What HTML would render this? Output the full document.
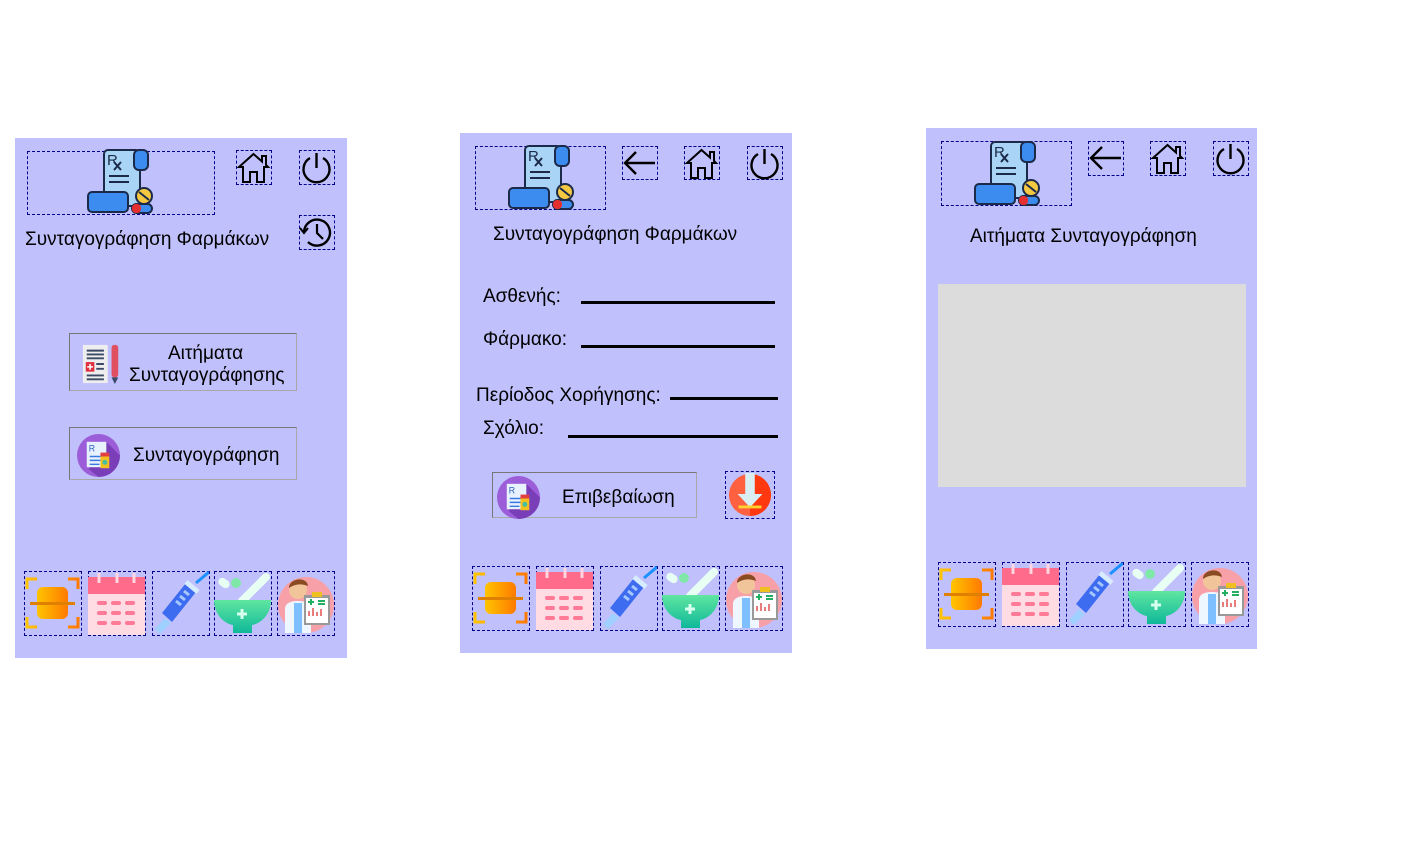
<!DOCTYPE html>
<html><head><meta charset="utf-8">
<style>
body{margin:0;width:1418px;height:845px;background:#fff;position:relative;overflow:hidden;font-family:"Liberation Sans","DejaVu Sans",sans-serif;color:#000}
.a{position:absolute}
.p{position:absolute;background:#c0c0fc}
.d{position:absolute;border:1px dashed #00008b;box-sizing:border-box}
.t{position:absolute;font-size:19px;white-space:nowrap;line-height:20px}
.ln{position:absolute;height:3px;background:#000}
.btn{position:absolute;border:1px solid #a8a8a8;border-top-color:#777;border-left-color:#777;box-sizing:border-box}
svg{position:absolute;overflow:visible}
</style></head><body>
<svg width="0" height="0" style="position:absolute">
<defs>
<linearGradient id="gO" x1="0" x2="1"><stop offset="0" stop-color="#ffc400"/><stop offset="1" stop-color="#ff7a00"/></linearGradient>
<linearGradient id="gG" x1="0" y1="0" x2="0" y2="1"><stop offset="0" stop-color="#5fe6a0"/><stop offset="1" stop-color="#0fb89a"/></linearGradient>
<symbol id="rx" viewBox="0 0 67 66">
<rect x="17" y="2" width="36" height="56" rx="4" fill="#a9d4f5" stroke="#1c2a4a" stroke-width="2"/>
<rect x="47" y="2" width="14" height="20" rx="5" fill="#3c8cf0" stroke="#1c2a4a" stroke-width="2"/>
<text x="20" y="17" font-size="15" font-family="Liberation Sans" fill="#1c2a4a">R</text>
<path d="M27 14l7 8M34 14l-7 8M22 28h20M22 34h20M22 48h16" stroke="#1c2a4a" stroke-width="2"/>
<rect x="1" y="44" width="40" height="20" rx="4" fill="#3c8cf0" stroke="#1c2a4a" stroke-width="2"/>
<circle cx="57" cy="48" r="8" fill="#f5c842" stroke="#1c2a4a" stroke-width="2"/>
<path d="M52 44l10 8" stroke="#1c2a4a" stroke-width="2"/>
<rect x="45" y="56" width="20" height="9" rx="4.5" fill="#3c8cf0" stroke="#1c2a4a" stroke-width="2"/>
<rect x="45" y="56" width="9" height="9" rx="4" fill="#e53030"/>
</symbol>
<symbol id="home" viewBox="0 0 35 34"><path d="M3 17L17.5 4 26 11.5V6h4v9L32 17h-4v15h-7V22h-7v10H7V17z" fill="none" stroke="#000" stroke-width="2" stroke-linejoin="miter"/></symbol>
<symbol id="pow" viewBox="0 0 35 34"><path d="M11 8A13 13 0 1 0 24 8" fill="none" stroke="#000" stroke-width="2.4"/><path d="M17.5 3v15" stroke="#000" stroke-width="2.4"/></symbol>
<symbol id="hist" viewBox="0 0 35 34"><path d="M5 17A13 13 0 1 1 9 27" fill="none" stroke="#000" stroke-width="2.4"/><path d="M1 13l4 5 4-5" fill="none" stroke="#000" stroke-width="2"/><path d="M18 9v9l6 6" fill="none" stroke="#000" stroke-width="2.2"/></symbol>
<symbol id="back" viewBox="0 0 35 34"><path d="M33 17H4M14 6L3 17l11 11" fill="none" stroke="#000" stroke-width="2.4"/></symbol>
<symbol id="i1" viewBox="0 0 57 64"><path d="M3 18V8h10M44 8h10v10M3 46v10h10M44 56h10V46" fill="none" stroke="url(#gO)" stroke-width="3"/><rect x="13" y="16" width="31" height="32" rx="6" fill="url(#gO)"/><rect x="6" y="31" width="45" height="3" fill="#e08000"/></symbol>
<symbol id="i2" viewBox="0 0 57 64"><rect x="0" y="6" width="57" height="58" fill="#ffdbe4"/><rect x="0" y="6" width="57" height="17" fill="#ff6b8a"/><path d="M11 2v10M29 2v10M46 2v10" stroke="#ffd6e0" stroke-width="3"/><g fill="#ff7a96"><rect x="9" y="30" width="10" height="4" rx="2"/><rect x="23" y="30" width="10" height="4" rx="2"/><rect x="37" y="30" width="10" height="4" rx="2"/><rect x="9" y="40" width="10" height="4" rx="2"/><rect x="23" y="40" width="10" height="4" rx="2"/><rect x="37" y="40" width="10" height="4" rx="2"/><rect x="9" y="50" width="10" height="4" rx="2"/><rect x="23" y="50" width="10" height="4" rx="2"/><rect x="37" y="50" width="10" height="4" rx="2"/></g></symbol>
<symbol id="i3" viewBox="0 0 57 64"><path d="M44 12L57 1" stroke="#1e90ff" stroke-width="3"/><path d="M34 12l10 9-24 30-10-9z" fill="#3d6cf0"/><path d="M3 58l10-11 6 5-11 11z" fill="#9fd0ff"/><path d="M34 11l12 10" stroke="#d8ecff" stroke-width="5"/><path d="M24 30l5 4M28 25l5 4M32 20l5 4" stroke="#a6c8ff" stroke-width="3"/></symbol>
<symbol id="i4" viewBox="0 0 57 64"><path d="M28 30L52 6" stroke="#e8fff4" stroke-width="8" stroke-linecap="round"/><rect x="4" y="8" width="12" height="8" rx="4" transform="rotate(35 10 12)" fill="#e8fff4"/><circle cx="22" cy="12" r="5" fill="#7fe8a8"/><path d="M0 29h57c0 16-12 24-19 25v8H19v-8C12 53 0 45 0 29z" fill="url(#gG)"/><path d="M28 38v10M23 43h10" stroke="#d6fff0" stroke-width="3"/></symbol>
<symbol id="i5" viewBox="0 0 57 64"><circle cx="29" cy="34" r="28" fill="#f7a0a8"/><circle cx="21" cy="19" r="9" fill="#f2c49a"/><path d="M12 17c0-10 18-12 19-2-5-2-12-3-19 2z" fill="#8a4a22"/><path d="M8 62V38c0-6 6-8 13-8s13 2 13 8v24z" fill="#eef6ff"/><path d="M17 32h8v30h-8z" fill="#7dbfff"/><rect x="27" y="24" width="26" height="30" fill="#999"/><rect x="29" y="27" width="22" height="25" fill="#fff"/><rect x="35" y="21" width="10" height="5" fill="#f0c020"/><path d="M31 31h6M34 28v6M41 30h7M41 33h7" stroke="#20b060" stroke-width="2"/><path d="M32 45v-5M36 45v-8M40 45v-4M44 45v-7" stroke="#e05050" stroke-width="1.5"/></symbol>
<symbol id="bt" viewBox="0 0 44 44"><circle cx="22" cy="22" r="22" fill="#9c5ed8"/><path d="M22 44a22 22 0 0 0 22-22L30 8 12 36z" fill="#7a3fb8"/><rect x="10" y="8" width="20" height="26" fill="#e8f2ff"/><text x="12" y="18" font-size="9" font-family="Liberation Sans" fill="#3060c0">R</text><path d="M13 23h14M13 27h14M13 31h10" stroke="#3a7ae0" stroke-width="1.5"/><rect x="24" y="22" width="9" height="13" fill="#f4c020"/><rect x="24" y="19" width="9" height="4" fill="#e04040"/><circle cx="28.5" cy="29" r="2.5" fill="#40c0a0"/></symbol>
<symbol id="doc" viewBox="0 0 44 44"><rect x="2" y="2" width="26" height="40" fill="#eee"/><path d="M6 8h18M6 12h18M6 16h18M16 22h8M16 27h8M6 34h18M6 38h18" stroke="#3a4a66" stroke-width="2"/><rect x="5" y="20" width="9" height="10" fill="#e03040"/><path d="M9.5 22v6M6.5 25h6" stroke="#fff" stroke-width="1.6"/><rect x="32" y="2" width="7" height="34" rx="3" fill="#e05060"/><path d="M32 36h7l-3.5 7z" fill="#3a4a66"/></symbol>
<symbol id="dl" viewBox="0 0 46 46"><circle cx="23" cy="23" r="22" fill="#ff6040"/><path d="M23 1a22 22 0 0 1 0 44z" fill="#ff3810"/><path d="M18 0h10v22h8L23 36 10 22h8z" fill="#d8eef2"/><rect x="11" y="34" width="24" height="3" fill="#ffd030"/></symbol>
</defs></svg>

<!-- PANEL 1 -->
<div class="p" style="left:15px;top:138px;width:332px;height:520px"></div>
<div class="d" style="left:27px;top:151px;width:188px;height:64px"></div>
<svg style="left:87px;top:148px" width="67" height="66"><use href="#rx"/></svg>
<div class="d" style="left:236px;top:150px;width:36px;height:35px"></div>
<svg style="left:236px;top:150px" width="35" height="34"><use href="#home"/></svg>
<div class="d" style="left:299px;top:150px;width:36px;height:35px"></div>
<svg style="left:299px;top:150px" width="35" height="34"><use href="#pow"/></svg>
<div class="d" style="left:299px;top:215px;width:36px;height:35px"></div>
<svg style="left:299px;top:215px" width="35" height="34"><use href="#hist"/></svg>
<div class="t" style="left:25px;top:230px">Συνταγογράφηση Φαρμάκων</div>
<div class="btn" style="left:69px;top:333px;width:228px;height:58px"></div>
<svg style="left:81px;top:343px" width="42" height="42"><use href="#doc"/></svg>
<div class="t" style="left:168px;top:344px">Αιτήματα</div>
<div class="t" style="left:129px;top:366px">Συνταγογράφησης</div>
<div class="btn" style="left:69px;top:427px;width:228px;height:53px"></div>
<svg style="left:77px;top:434px" width="43" height="43"><use href="#bt"/></svg>
<div class="t" style="left:133px;top:446px">Συνταγογράφηση</div>
<div class="d" style="left:24px;top:571px;width:58px;height:65px"></div><svg style="left:24px;top:571px" width="57" height="64"><use href="#i1"/></svg>
<div class="d" style="left:88px;top:571px;width:58px;height:65px"></div><svg style="left:88px;top:571px" width="57" height="64"><use href="#i2"/></svg>
<div class="d" style="left:152px;top:571px;width:58px;height:65px"></div><svg style="left:152px;top:571px" width="57" height="64"><use href="#i3"/></svg>
<div class="d" style="left:214px;top:571px;width:58px;height:65px"></div><svg style="left:214px;top:571px" width="57" height="64"><use href="#i4"/></svg>
<div class="d" style="left:277px;top:571px;width:58px;height:65px"></div><svg style="left:277px;top:571px" width="57" height="64"><use href="#i5"/></svg>

<!-- PANEL 2 -->
<div class="p" style="left:460px;top:133px;width:332px;height:520px"></div>
<div class="d" style="left:475px;top:146px;width:131px;height:64px"></div>
<svg style="left:508px;top:144px" width="67" height="66"><use href="#rx"/></svg>
<div class="d" style="left:622px;top:146px;width:36px;height:34px"></div><svg style="left:622px;top:146px" width="35" height="34"><use href="#back"/></svg>
<div class="d" style="left:684px;top:146px;width:36px;height:34px"></div><svg style="left:684px;top:146px" width="35" height="34"><use href="#home"/></svg>
<div class="d" style="left:747px;top:146px;width:36px;height:34px"></div><svg style="left:747px;top:146px" width="35" height="34"><use href="#pow"/></svg>
<div class="t" style="left:493px;top:225px">Συνταγογράφηση Φαρμάκων</div>
<div class="t" style="left:483px;top:287px">Ασθενής:</div><div class="ln" style="left:581px;top:301px;width:194px"></div>
<div class="t" style="left:483px;top:330px">Φάρμακο:</div><div class="ln" style="left:581px;top:345px;width:194px"></div>
<div class="t" style="left:476px;top:386px">Περίοδος Χορήγησης:</div><div class="ln" style="left:670px;top:397px;width:108px"></div>
<div class="t" style="left:483px;top:419px">Σχόλιο:</div><div class="ln" style="left:568px;top:435px;width:210px"></div>
<div class="btn" style="left:492px;top:472px;width:205px;height:46px"></div>
<svg style="left:497px;top:476px" width="43" height="43"><use href="#bt"/></svg>
<div class="t" style="left:562px;top:488px">Επιβεβαίωση</div>
<div class="d" style="left:725px;top:471px;width:50px;height:48px"></div>
<svg style="left:728px;top:473px" width="44" height="44"><use href="#dl"/></svg>
<div class="d" style="left:472px;top:566px;width:58px;height:65px"></div><svg style="left:472px;top:566px" width="57" height="64"><use href="#i1"/></svg>
<div class="d" style="left:536px;top:566px;width:58px;height:65px"></div><svg style="left:536px;top:566px" width="57" height="64"><use href="#i2"/></svg>
<div class="d" style="left:600px;top:566px;width:58px;height:65px"></div><svg style="left:600px;top:566px" width="57" height="64"><use href="#i3"/></svg>
<div class="d" style="left:662px;top:566px;width:58px;height:65px"></div><svg style="left:662px;top:566px" width="57" height="64"><use href="#i4"/></svg>
<div class="d" style="left:725px;top:566px;width:58px;height:65px"></div><svg style="left:725px;top:566px" width="57" height="64"><use href="#i5"/></svg>

<!-- PANEL 3 -->
<div class="p" style="left:926px;top:128px;width:331px;height:521px"></div>
<div class="d" style="left:941px;top:141px;width:131px;height:65px"></div>
<svg style="left:974px;top:140px" width="67" height="66"><use href="#rx"/></svg>
<div class="d" style="left:1088px;top:141px;width:36px;height:35px"></div><svg style="left:1088px;top:141px" width="35" height="34"><use href="#back"/></svg>
<div class="d" style="left:1150px;top:141px;width:36px;height:35px"></div><svg style="left:1150px;top:141px" width="35" height="34"><use href="#home"/></svg>
<div class="d" style="left:1213px;top:141px;width:36px;height:35px"></div><svg style="left:1213px;top:141px" width="35" height="34"><use href="#pow"/></svg>
<div class="t" style="left:970px;top:227px">Αιτήματα Συνταγογράφηση</div>
<div class="a" style="left:938px;top:284px;width:308px;height:203px;background:#dcdcdc"></div>
<div class="d" style="left:938px;top:562px;width:58px;height:65px"></div><svg style="left:938px;top:562px" width="57" height="64"><use href="#i1"/></svg>
<div class="d" style="left:1002px;top:562px;width:58px;height:65px"></div><svg style="left:1002px;top:562px" width="57" height="64"><use href="#i2"/></svg>
<div class="d" style="left:1066px;top:562px;width:58px;height:65px"></div><svg style="left:1066px;top:562px" width="57" height="64"><use href="#i3"/></svg>
<div class="d" style="left:1128px;top:562px;width:58px;height:65px"></div><svg style="left:1128px;top:562px" width="57" height="64"><use href="#i4"/></svg>
<div class="d" style="left:1191px;top:562px;width:58px;height:65px"></div><svg style="left:1191px;top:562px" width="57" height="64"><use href="#i5"/></svg>
</body></html>
